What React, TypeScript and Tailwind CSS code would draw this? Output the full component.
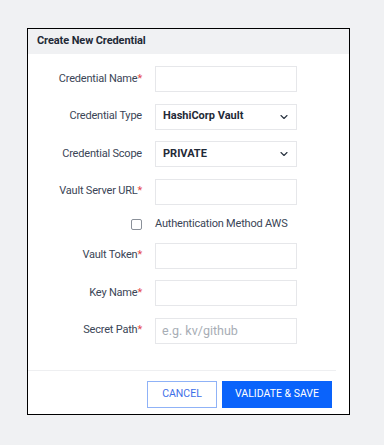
import { ChevronDown } from "lucide-react";

const font = { fontFamily: "Roboto, 'Liberation Sans', sans-serif" };

function Label({ text, required }: { text: string; required?: boolean }) {
    return (
        <div className="text-right text-[11px] tracking-[-0.2px] text-[#3a4556]">
            {text}
            {required && <span className="text-[#e5484d]">*</span>}
        </div>
    );
}

function TextRow({ label, required, placeholder }: { label: string; required?: boolean; placeholder?: string }) {
    return (
        <div className="grid grid-cols-[114px_142px] gap-x-[13px] items-center">
            <Label text={label} required={required} />
            <input
                placeholder={placeholder}
                className="h-[26px] w-[142px] border border-[#e6e7ea] px-[6px] text-[12.5px] text-[#2a3441] outline-none placeholder:text-[#a7adb5]"
            />
        </div>
    );
}

function SelectRow({ label, value }: { label: string; value: string }) {
    return (
        <div className="grid grid-cols-[114px_142px] gap-x-[13px] items-center">
            <Label text={label} />
            <div className="h-[26px] w-[142px] border border-[#e6e7ea] pl-[7px] pr-[6px] flex items-center justify-between">
                <span className="text-[11px] font-bold text-[#1f2a37]">{value}</span>
                <ChevronDown className="w-[12px] h-[12px] text-[#2a3441]" strokeWidth={2.25} />
            </div>
        </div>
    );
}

export default function App() {
    return (
        <div className="w-[384px] h-[445px] bg-[#f0f1f3] pt-[28px] pl-[27px]" style={font}>
            <div className="w-[323px] border border-black bg-white">
                <div className="h-[25px] bg-[#f0f1f3] px-[9px] flex items-center text-[11px] tracking-[-0.1px] font-bold text-[#1f2a37]">
                    Create New Credential
                </div>
                <div className="pt-[12px] pb-[26px] flex flex-col gap-[11.5px]">
                    <TextRow label="Credential Name" required />
                    <SelectRow label="Credential Type" value="HashiCorp Vault" />
                    <SelectRow label="Credential Scope" value="PRIVATE" />
                    <TextRow label="Vault Server URL" required />
                    <div className="grid grid-cols-[114px_142px] gap-x-[13px] items-center h-[15px]">
                        <div className="flex justify-end">
                            <span className="w-[11px] h-[11px] border border-[#8a9099] rounded-[2px]" />
                        </div>
                        <span className="text-[11px] tracking-[-0.2px] text-[#3a4556] whitespace-nowrap">Authentication Method AWS</span>
                    </div>
                    <TextRow label="Vault Token" required />
                    <TextRow label="Key Name" required />
                    <TextRow label="Secret Path" required placeholder="e.g. kv/github" />
                </div>
                <div className="mr-[13px] border-t border-[#eeeff1]" />
                <div className="flex justify-end gap-[5px] pt-[10px] pb-[6px] pr-[17px]">
                    <button className="w-[70px] h-[27px] border border-[#8fb2f7] text-[10.5px] text-[#3d6fe8]">
                        CANCEL
                    </button>
                    <button className="w-[110px] h-[27px] bg-[#0a63fb] text-[10.5px] text-white">
                        VALIDATE &amp; SAVE
                    </button>
                </div>
            </div>
        </div>
    );
}
